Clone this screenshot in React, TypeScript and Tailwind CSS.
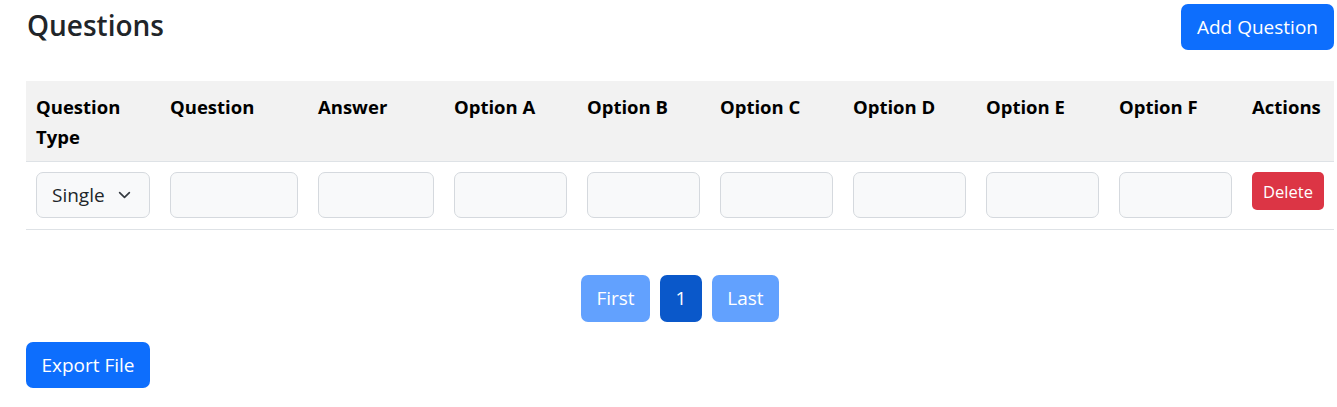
import React from 'react';

const columns = [
  { label: 'Question Type', w: 'w-[134px]' },
  { label: 'Question', w: 'w-[148px]' },
  { label: 'Answer', w: 'w-[136px]' },
  { label: 'Option A', w: 'w-[133px]' },
  { label: 'Option B', w: 'w-[133px]' },
  { label: 'Option C', w: 'w-[133px]' },
  { label: 'Option D', w: 'w-[133px]' },
  { label: 'Option E', w: 'w-[133px]' },
  { label: 'Option F', w: 'w-[133px]' },
  { label: 'Actions', w: 'w-[92px]' },
];

const TextCell: React.FC = () => (
  <td className="px-[10px] py-[10px] align-top">
    <input
      type="text"
      className="block w-full h-[46px] rounded-[7px] border border-[#d5d9de] bg-[#f8f9fa] px-[14px] outline-none"
    />
  </td>
);

const App: React.FC = () => {
  return (
    <div className="min-h-[407px] bg-white text-[#212529] font-['Open_Sans','Noto_Sans',sans-serif] text-[19px] leading-[29px]">
      <div className="ml-[26px] w-[1308px]">
        {/* Header */}
        <div className="flex items-start justify-between pt-[4px]">
          <h2 className="pt-[1px] pl-[1px] text-[28px] leading-[40px] font-semibold text-[#212529]">Questions</h2>
          <button className="h-[46px] px-[16px] rounded-[7px] bg-[#0d6efd] text-white">
            Add Question
          </button>
        </div>

        {/* Table */}
        <table className="mt-[31px] w-[1308px] table-fixed border-collapse">
          <colgroup>
            {columns.map((c) => (
              <col key={c.label} className={c.w} />
            ))}
          </colgroup>
          <thead>
            <tr className="bg-[#f2f2f2] border-b border-[#dee2e6]">
              {columns.map((c) => (
                <th
                  key={c.label}
                  className="px-[10px] pt-[11px] pb-[9px] text-left align-top font-bold text-[18.5px] leading-[30px] text-black h-[80px]"
                >
                  {c.label}
                </th>
              ))}
            </tr>
          </thead>
          <tbody>
            <tr className="border-b border-[#dee2e6]">
              <td className="px-[10px] pt-[10px] pb-[11px] align-top">
                <div className="relative h-[46px] w-full rounded-[7px] border border-[#d5d9de] bg-[#f8f9fa]">
                  <span className="absolute left-[15px] top-[8px]">Single</span>
                  <svg
                    className="absolute right-[18px] top-[17px]"
                    width="13"
                    height="10"
                    viewBox="0 0 16 12"
                    fill="none"
                    stroke="#343a40"
                    strokeWidth="2"
                    strokeLinecap="round"
                    strokeLinejoin="round"
                  >
                    <path d="m2 3 6 6 6-6" />
                  </svg>
                </div>
              </td>
              <TextCell />
              <TextCell />
              <TextCell />
              <TextCell />
              <TextCell />
              <TextCell />
              <TextCell />
              <TextCell />
              <td className="px-[10px] py-[10px] align-top">
                <button className="h-[38px] w-[72px] rounded-[5px] bg-[#dc3545] text-white text-[16.5px]">
                  Delete
                </button>
              </td>
            </tr>
          </tbody>
        </table>

        {/* Pagination */}
        <div className="mt-[45px] flex justify-center gap-[10px]">
          <button className="h-[47px] w-[69px] rounded-[7px] bg-[#62a1fe] text-white">First</button>
          <button className="h-[47px] w-[42px] rounded-[7px] bg-[#0a58ca] text-white">1</button>
          <button className="h-[47px] w-[67px] rounded-[7px] bg-[#62a1fe] text-white">Last</button>
        </div>

        {/* Export */}
        <div className="mt-[20px]">
          <button className="h-[46px] w-[124px] rounded-[7px] bg-[#0d6efd] text-white">Export File</button>
        </div>
      </div>
    </div>
  );
};

export default App;
